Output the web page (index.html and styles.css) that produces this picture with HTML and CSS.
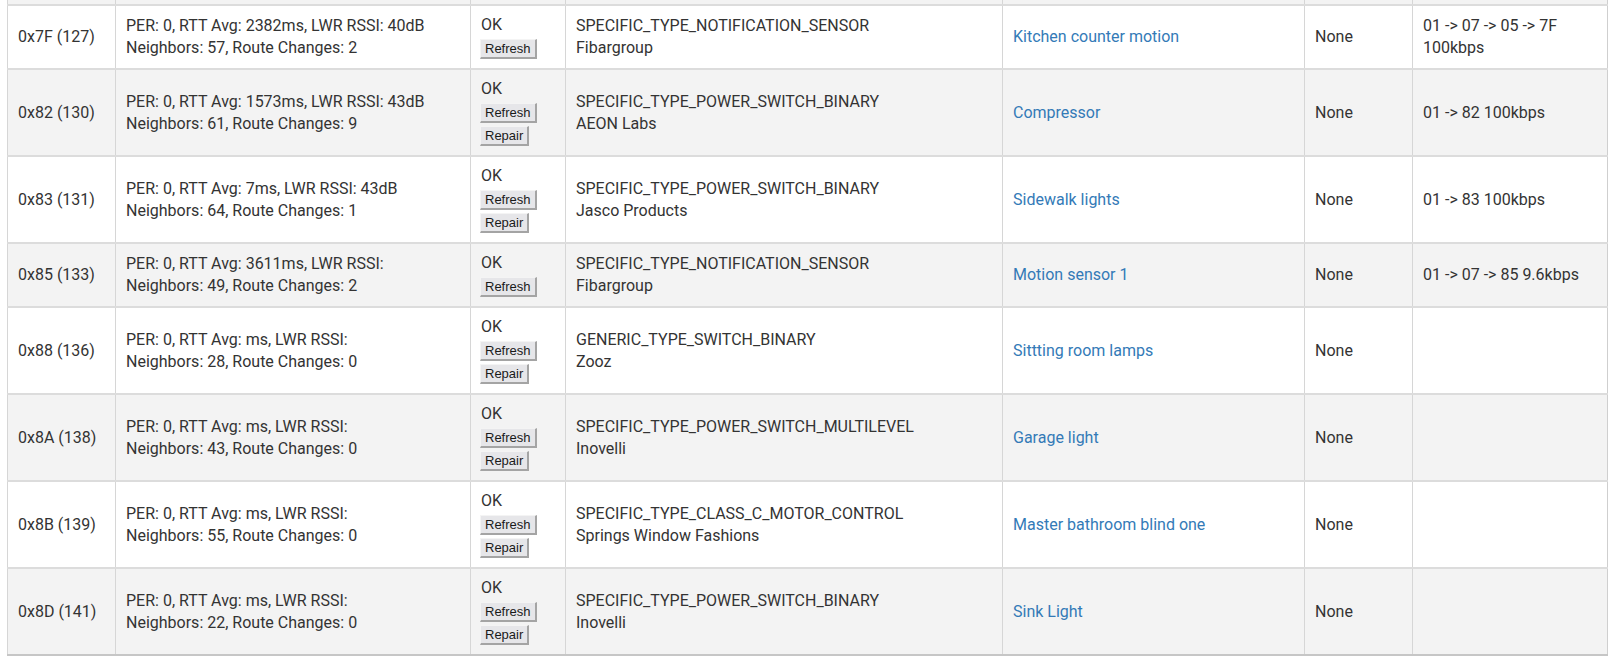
FILE: index.html
```html
<!DOCTYPE html>
<html>
<head>
<meta charset="utf-8">
<link rel="stylesheet" href="styles.css">
</head>
<body>
<div class="wrap">
<table class="devices">
  <colgroup>
    <col class="c-id"><col class="c-stats"><col class="c-status"><col class="c-type"><col class="c-name"><col class="c-sec"><col class="c-route">
  </colgroup>
  <tbody>
    <tr class="cut"><td></td><td></td><td></td><td></td><td></td><td></td><td></td></tr>
    <tr>
      <td>0x7F (127)</td>
      <td class="stats">PER: 0, RTT Avg: 2382ms, LWR RSSI: 40dB<br>Neighbors: 57, Route Changes: 2</td>
      <td><div class="status"><span>OK</span><button class="btn">Refresh</button></div></td>
      <td>SPECIFIC_TYPE_NOTIFICATION_SENSOR<br>Fibargroup</td>
      <td><a href="#">Kitchen counter motion</a></td>
      <td>None</td>
      <td>01 -&gt; 07 -&gt; 05 -&gt; 7F 100kbps</td>
    </tr>
    <tr class="alt">
      <td>0x82 (130)</td>
      <td class="stats">PER: 0, RTT Avg: 1573ms, LWR RSSI: 43dB<br>Neighbors: 61, Route Changes: 9</td>
      <td><div class="status"><span>OK</span><button class="btn">Refresh</button><button class="btn">Repair</button></div></td>
      <td>SPECIFIC_TYPE_POWER_SWITCH_BINARY<br>AEON Labs</td>
      <td><a href="#">Compressor</a></td>
      <td>None</td>
      <td>01 -&gt; 82 100kbps</td>
    </tr>
    <tr>
      <td>0x83 (131)</td>
      <td class="stats">PER: 0, RTT Avg: 7ms, LWR RSSI: 43dB<br>Neighbors: 64, Route Changes: 1</td>
      <td><div class="status"><span>OK</span><button class="btn">Refresh</button><button class="btn">Repair</button></div></td>
      <td>SPECIFIC_TYPE_POWER_SWITCH_BINARY<br>Jasco Products</td>
      <td><a href="#">Sidewalk lights</a></td>
      <td>None</td>
      <td>01 -&gt; 83 100kbps</td>
    </tr>
    <tr class="alt">
      <td>0x85 (133)</td>
      <td class="stats">PER: 0, RTT Avg: 3611ms, LWR RSSI:<br>Neighbors: 49, Route Changes: 2</td>
      <td><div class="status"><span>OK</span><button class="btn">Refresh</button></div></td>
      <td>SPECIFIC_TYPE_NOTIFICATION_SENSOR<br>Fibargroup</td>
      <td><a href="#">Motion sensor 1</a></td>
      <td>None</td>
      <td>01 -&gt; 07 -&gt; 85 9.6kbps</td>
    </tr>
    <tr>
      <td>0x88 (136)</td>
      <td class="stats">PER: 0, RTT Avg: ms, LWR RSSI:<br>Neighbors: 28, Route Changes: 0</td>
      <td><div class="status"><span>OK</span><button class="btn">Refresh</button><button class="btn">Repair</button></div></td>
      <td>GENERIC_TYPE_SWITCH_BINARY<br>Zooz</td>
      <td><a href="#">Sittting room lamps</a></td>
      <td>None</td>
      <td></td>
    </tr>
    <tr class="alt">
      <td>0x8A (138)</td>
      <td class="stats">PER: 0, RTT Avg: ms, LWR RSSI:<br>Neighbors: 43, Route Changes: 0</td>
      <td><div class="status"><span>OK</span><button class="btn">Refresh</button><button class="btn">Repair</button></div></td>
      <td>SPECIFIC_TYPE_POWER_SWITCH_MULTILEVEL<br>Inovelli</td>
      <td><a href="#">Garage light</a></td>
      <td>None</td>
      <td></td>
    </tr>
    <tr>
      <td>0x8B (139)</td>
      <td class="stats">PER: 0, RTT Avg: ms, LWR RSSI:<br>Neighbors: 55, Route Changes: 0</td>
      <td><div class="status"><span>OK</span><button class="btn">Refresh</button><button class="btn">Repair</button></div></td>
      <td>SPECIFIC_TYPE_CLASS_C_MOTOR_CONTROL<br>Springs Window Fashions</td>
      <td><a href="#">Master bathroom blind one</a></td>
      <td>None</td>
      <td></td>
    </tr>
    <tr class="alt">
      <td>0x8D (141)</td>
      <td class="stats">PER: 0, RTT Avg: ms, LWR RSSI:<br>Neighbors: 22, Route Changes: 0</td>
      <td><div class="status"><span>OK</span><button class="btn">Refresh</button><button class="btn">Repair</button></div></td>
      <td>SPECIFIC_TYPE_POWER_SWITCH_BINARY<br>Inovelli</td>
      <td><a href="#">Sink Light</a></td>
      <td>None</td>
      <td></td>
    </tr>
  </tbody>
</table>
</div>
</body>
</html>
```

FILE: styles.css
```css
html, body {
  margin: 0;
  padding: 0;
  background: #fff;
}
body {
  font-family: Roboto, "Liberation Sans", sans-serif;
  font-size: 16px;
  line-height: 22px;
  color: #333;
}
.wrap {
  padding-left: 7px;
}
.devices {
  width: 1600px;
  table-layout: fixed;
  border-collapse: collapse;
  border-bottom: 2px solid #c6c6c6;
  border-right: 1px solid #cfcfcf;
}
.c-id { width: 108px; }
.c-stats { width: 355px; }
.c-status { width: 95px; }
.c-type { width: 437px; }
.c-name { width: 302px; }
.c-sec { width: 108px; }
.c-route { width: 195px; }

.devices td {
  border-top: 2px solid #dcdcdc;
  border-left: 1px solid #d6d6d6;
  padding: 8px 10px 8px 10px;
  vertical-align: middle;
  background: #fff;
}
.devices tr.alt td,
.devices tr.cut td {
  background: #f3f3f3;
}
.devices tr.cut td {
  border-top: 0;
  padding: 0;
  height: 4px;
}
.status {
  display: flex;
  flex-direction: column;
  align-items: flex-start;
  padding-bottom: 1px;
}
.btn {
  margin: 3px 0 0 -1px;
  height: 20px;
  padding: 0 4px;
  font-family: "Liberation Sans", Arial, sans-serif;
  font-size: 13px;
  line-height: 16px;
  color: #1a1a1a;
  background: #e6e6e9;
  border-style: solid;
  border-width: 1px 2px 2px 1px;
  border-color: #f4f4f4 #a4a4a4 #a4a4a4 #f4f4f4;
  border-radius: 0;
}
a {
  color: #337ab7;
  text-decoration: none;
}
```
